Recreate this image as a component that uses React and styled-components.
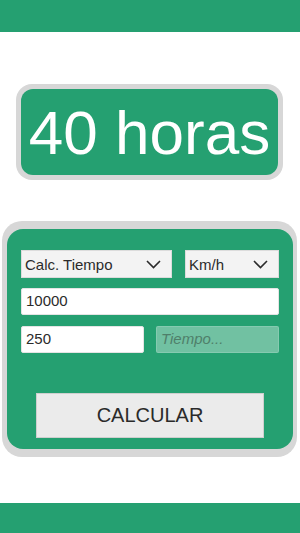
import styled, { createGlobalStyle } from 'styled-components';

const GREEN = '#25a071';
const FRAME = '#d7d7d7';

const Global = createGlobalStyle`
  html, body {
    margin: 0;
    padding: 0;
    background: #fff;
    font-family: "Liberation Sans", Arial, sans-serif;
  }
`;

const Page = styled.div`
  width: 300px;
  height: 533px;
  display: flex;
  flex-direction: column;
  overflow: hidden;
`;

const Bar = styled.div`
  height: ${props => props.h}px;
  background: ${GREEN};
  flex-shrink: 0;
`;

const Spacer = styled.div`
  height: ${props => props.h}px;
  flex-shrink: 0;
`;

const ResultFrame = styled.div`
  margin: 0 17px 0 16px;
  height: 96px;
  box-sizing: border-box;
  padding: 5px;
  background: ${FRAME};
  border-radius: 16px;
  display: flex;
`;

const ResultBox = styled.div`
  flex: 1;
  background: ${GREEN};
  border-radius: 12px;
  display: flex;
  align-items: center;
  justify-content: center;
  color: #fff;
  font-size: 62px;
  line-height: 1;
  padding-top: 2px;
`;

const PanelFrame = styled.div`
  margin: 0 3px 0 2px;
  height: 236px;
  box-sizing: border-box;
  padding: 8px 4px 8px 5px;
  background: ${FRAME};
  border-radius: 20px;
  display: flex;
`;

const Panel = styled.div`
  flex: 1;
  background: ${GREEN};
  border-radius: 16px;
  padding: 21px 14px 10px 14px;
  display: flex;
  flex-direction: column;
`;

const Row = styled.div`
  display: flex;
  justify-content: space-between;
  margin-top: ${props => props.mt || 0}px;
`;

const Select = styled.div`
  width: ${props => props.w}px;
  height: 28px;
  box-sizing: border-box;
  background: #f3f3f3;
  border: 1px solid #dcdcdc;
  display: flex;
  align-items: center;
  justify-content: space-between;
  padding: 0 10px 0 3px;
  font-size: 15px;
  color: #2b2b2b;
`;

const Input = styled.div`
  width: ${props => props.w}px;
  height: 27px;
  box-sizing: border-box;
  background: ${props => (props.muted ? 'rgba(255,255,255,0.35)' : '#fff')};
  border: 1px solid ${props => (props.muted ? 'rgba(255,255,255,0.15)' : '#e4e4e4')};
  border-radius: 2px;
  padding: 1px 4px 0;
  font-size: 15px;
  line-height: 22px;
  color: ${props => (props.muted ? '#4f7f6a' : '#2b2b2b')};
  font-style: ${props => (props.muted ? 'italic' : 'normal')};
`;

const Button = styled.div`
  margin: 40px 15px 0 15px;
  height: 45px;
  box-sizing: border-box;
  background: #ebebeb;
  border: 1px solid #cfcfcf;
  display: flex;
  align-items: center;
  justify-content: center;
  font-size: 20px;
  color: #2a2a2a;
`;

const Chevron = () => (
  <svg width="15" height="9" viewBox="0 0 15 9">
    <polyline points="1,1 7.5,7.5 14,1" fill="none" stroke="#2b2b2b" strokeWidth="1.6" />
  </svg>
);

export default function App() {
  return (
    <Page>
      <Global />
      <Bar h={32} />
      <Spacer h={52} />
      <ResultFrame>
        <ResultBox>40 horas</ResultBox>
      </ResultFrame>
      <Spacer h={41} />
      <PanelFrame>
        <Panel>
          <Row>
            <Select w={151}>
              Calc. Tiempo
              <Chevron />
            </Select>
            <Select w={94}>
              Km/h
              <Chevron />
            </Select>
          </Row>
          <Row mt={10}>
            <Input w={258}>10000</Input>
          </Row>
          <Row mt={11}>
            <Input w={123}>250</Input>
            <Input w={123} muted>Tiempo...</Input>
          </Row>
          <Button>CALCULAR</Button>
        </Panel>
      </PanelFrame>
      <Spacer h={46} />
      <Bar h={30} />
    </Page>
  );
}
